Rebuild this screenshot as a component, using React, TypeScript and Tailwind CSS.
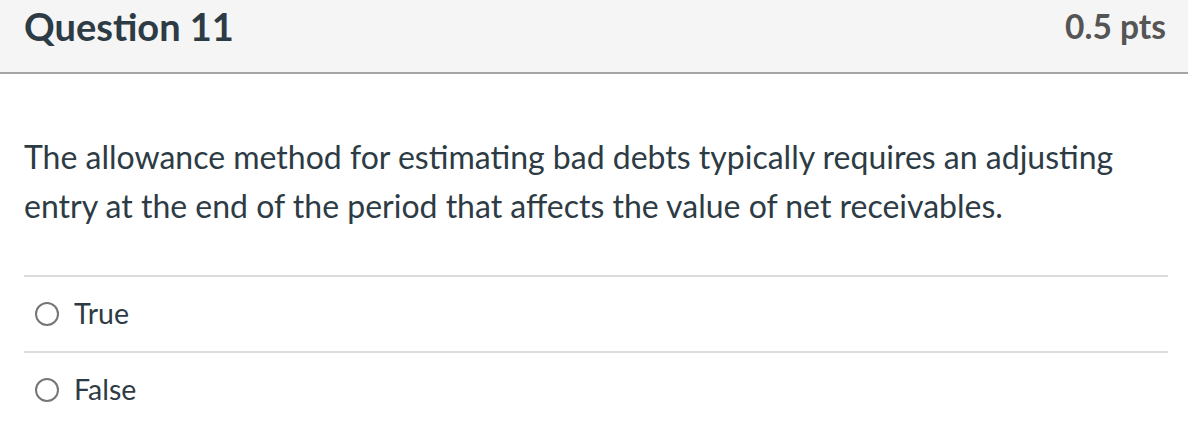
const options = ['True', 'False']

export default function App() {
  return (
    <div className="w-[1188px] h-[432px] bg-white font-['Lato',sans-serif] text-[#2d3b45] overflow-hidden">
      <div className="h-[74px] bg-[#f5f5f5] border-b-2 border-[#a5a5a5] flex items-center justify-between pl-[24px] pr-[22px]">
        <h2 className="text-[38px] font-bold leading-none -mt-[20px]">Question 11</h2>
        <div className="text-[33.5px] font-bold text-[#555] leading-none -mt-[18px]">0.5 pts</div>
      </div>
      <div className="pl-[24px] pr-[20px]">
        <p className="mt-[58px] text-[32px] leading-[49px]">
          The allowance method for estimating bad debts typically requires an adjusting entry at the end of the period that affects the value of net receivables.
        </p>
        <div className="mt-[45px]">
          {options.map((opt) => (
            <div key={opt} className="border-t-2 border-[#dddddd] h-[76px] flex items-center gap-[15px] pl-[11px]">
              <span className="w-[24px] h-[24px] rounded-full border-2 border-[#767676] bg-white" />
              <span className="text-[28.5px] -mt-[2px]">{opt}</span>
            </div>
          ))}
        </div>
      </div>
    </div>
  )
}
